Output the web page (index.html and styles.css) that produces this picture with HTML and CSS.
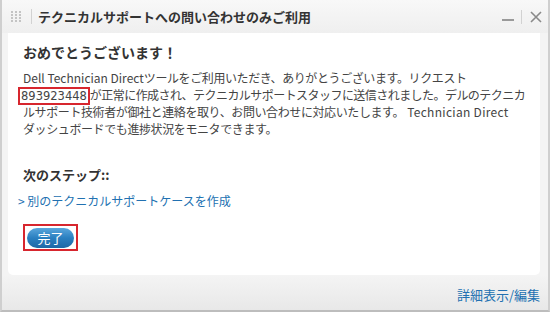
FILE: index.html
```html
<!DOCTYPE html>
<html lang="ja">
<head>
<meta charset="utf-8">
<title>テクニカルサポート</title>
<link rel="stylesheet" href="styles.css">
</head>
<body>
<div class="window">
  <div class="header">
    <svg class="grip" width="10" height="12" viewBox="0 0 10 12">
      <g fill="#c4c4c4">
        <rect x="0" y="0" width="2" height="2"/><rect x="4" y="0" width="2" height="2"/><rect x="8" y="0" width="2" height="2"/>
        <rect x="0" y="3" width="2" height="2"/><rect x="4" y="3" width="2" height="2"/><rect x="8" y="3" width="2" height="2"/>
        <rect x="0" y="6" width="2" height="2"/><rect x="4" y="6" width="2" height="2"/><rect x="8" y="6" width="2" height="2"/>
        <rect x="0" y="9" width="2" height="2"/><rect x="4" y="9" width="2" height="2"/><rect x="8" y="9" width="2" height="2"/>
      </g>
    </svg>
    <span class="sep"></span>
    <span class="title">テクニカルサポートへの問い合わせのみご利用</span>
    <div class="controls">
      <svg class="min" width="12" height="4" viewBox="0 0 12 4"><rect x="0" y="1" width="12" height="2" fill="#9a9a9a"/></svg>
      <span class="sep small"></span>
      <svg class="close" width="12" height="12" viewBox="0 0 12 12"><path d="M1 1L11 11M11 1L1 11" stroke="#8a8a8a" stroke-width="1.6" fill="none"/></svg>
    </div>
  </div>
  <div class="panel">
    <h1 class="heading">おめでとうございます！</h1>
    <p class="message"><span class="latin">Dell Technician Direct</span>ツールをご利用いただき、ありがとうございます。リクエスト<br><span class="req">893923448</span><span class="tight">が正常に作成され、テクニカルサポートスタッフに送信されました。デルのテクニカ</span><br>ルサポート技術者が御社と連絡を取り、お問い合わせに対応いたします。<span class="latin wide">Technician Direct</span><br>ダッシュボードでも進捗状況をモニタできます。</p>
    <h2 class="next">次のステップ::</h2>
    <a class="link" href="#">&gt; 別のテクニカルサポートケースを作成</a>
    <div class="done-wrap"><button class="done">完了</button></div>
  </div>
  <div class="footer">
    <a class="foot-link" href="#">詳細表示/編集</a>
  </div>
</div>
</body>
</html>
```
FILE: styles.css
```css
html, body {
  margin: 0;
  padding: 0;
}
body {
  width: 550px;
  height: 312px;
  overflow: hidden;
  font-family: "Noto Sans CJK JP", "Noto Sans", sans-serif;
  color: #3a3a3a;
}
.window {
  width: 550px;
  height: 312px;
  box-sizing: border-box;
  border-left: 2px solid #cfcfcf;
  border-right: 2px solid #cfcfcf;
  border-bottom: 2px solid #bdbdbd;
  background: #f4f4f4;
  display: flex;
  flex-direction: column;
}
.header {
  height: 33px;
  flex: none;
  display: flex;
  align-items: center;
  padding-left: 9px;
  background: linear-gradient(#f8f8f8, #efefef);
}
.grip {
  display: block;
}
.sep {
  display: block;
  width: 1px;
  height: 15px;
  background: #d2d2d2;
  margin: 0 6px 0 10px;
}
.title {
  font-size: 13px;
  font-weight: bold;
  color: #333;
}
.controls {
  margin-left: auto;
  display: flex;
  align-items: center;
  padding-right: 6px;
}
.controls .min {
  display: block;
  margin-top: 6px;
}
.sep.small {
  height: 14px;
  margin: 0 8px 0 7px;
}
.controls .close {
  display: block;
}
.panel {
  flex: none;
  height: 242px;
  margin: 0 8px 0 6px;
  background: #fff;
  border-radius: 0 0 5px 5px;
  box-sizing: border-box;
  padding: 10px 15px 0 15px;
}
.heading {
  margin: 0;
  font-size: 14px;
  line-height: 18px;
  font-weight: bold;
  color: #333;
}
.message {
  margin: 8px 0 0 0;
  font-size: 12px;
  line-height: 17px;
  color: #444;
  white-space: nowrap;
  letter-spacing: -0.4px;
}
.latin {
  letter-spacing: 0;
}
.latin.wide {
  letter-spacing: 0.3px;
  margin-left: 3px;
}
.tight {
  letter-spacing: -0.55px;
}
.req {
  font-family: "DejaVu Sans", sans-serif;
  font-size: 11.5px;
  line-height: 12px;
  letter-spacing: 0;
  border: 2px solid #d7262e;
  padding: 0 1px;
  margin-left: -5px;
}
.next {
  margin: 29px 0 0 0;
  font-size: 13px;
  line-height: 17px;
  font-weight: bold;
  color: #333;
}
.link {
  display: block;
  margin: 9px 0 0 -5px;
  font-size: 12px;
  line-height: 17px;
  color: #2271b1;
  text-decoration: none;
}
.done-wrap {
  margin-top: 15px;
  width: 51px;
  height: 23px;
  border: 2px solid #d7262e;
  display: flex;
  align-items: center;
  justify-content: center;
}
.done {
  width: 47px;
  height: 20px;
  border: none;
  border-radius: 10px;
  padding: 0;
  background: linear-gradient(#5aa6dc, #2a7fc0 50%, #1d68a6);
  color: #fff;
  font-family: "Noto Sans CJK JP", sans-serif;
  font-size: 13px;
  line-height: 20px;
}
.footer {
  flex: 1;
  display: flex;
  justify-content: flex-end;
  align-items: center;
  padding-right: 8px;
  background: linear-gradient(#f4f4f4, #e8e8e8);
}
.foot-link {
  font-size: 13px;
  color: #2271b1;
  text-decoration: none;
  margin-top: 4px;
}
```
